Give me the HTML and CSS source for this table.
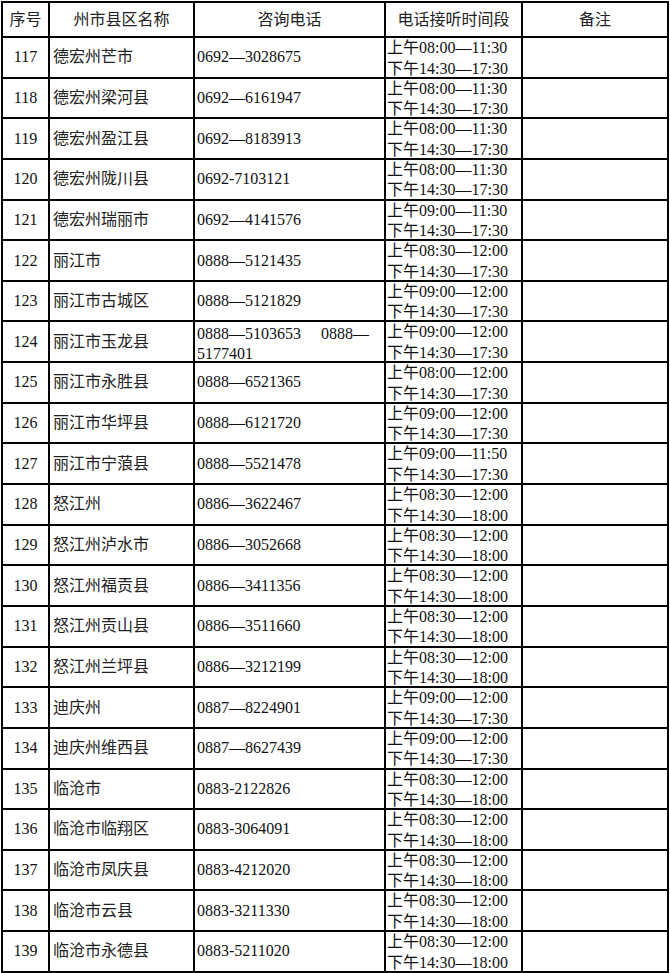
FILE: index.html
```html
<!DOCTYPE html>
<html lang="zh-CN">
<head>
<meta charset="utf-8">
<title>咨询电话表</title>
<link rel="stylesheet" href="styles.css">
</head>
<body>
<table class="tbl">
<colgroup>
<col class="c-no"><col class="c-name"><col class="c-tel"><col class="c-time"><col class="c-note">
</colgroup>
<thead>
<tr class="head"><th>序号</th><th>州市县区名称</th><th>咨询电话</th><th>电话接听时间段</th><th>备注</th></tr>
</thead>
<tbody>
<tr><td class="no">117</td><td class="name">德宏州芒市</td><td class="tel">0692—3028675</td><td class="time"><div class="lines">上午08:00—11:30<br>下午14:30—17:30</div></td><td></td></tr>
<tr><td class="no">118</td><td class="name">德宏州梁河县</td><td class="tel">0692—6161947</td><td class="time"><div class="lines">上午08:00—11:30<br>下午14:30—17:30</div></td><td></td></tr>
<tr><td class="no">119</td><td class="name">德宏州盈江县</td><td class="tel">0692—8183913</td><td class="time"><div class="lines">上午08:00—11:30<br>下午14:30—17:30</div></td><td></td></tr>
<tr><td class="no">120</td><td class="name">德宏州陇川县</td><td class="tel">0692-7103121</td><td class="time"><div class="lines">上午08:00—11:30<br>下午14:30—17:30</div></td><td></td></tr>
<tr><td class="no">121</td><td class="name">德宏州瑞丽市</td><td class="tel">0692—4141576</td><td class="time"><div class="lines">上午09:00—11:30<br>下午14:30—17:30</div></td><td></td></tr>
<tr><td class="no">122</td><td class="name">丽江市</td><td class="tel">0888—5121435</td><td class="time"><div class="lines">上午08:30—12:00<br>下午14:30—17:30</div></td><td></td></tr>
<tr><td class="no">123</td><td class="name">丽江市古城区</td><td class="tel">0888—5121829</td><td class="time"><div class="lines">上午09:00—12:00<br>下午14:30—17:30</div></td><td></td></tr>
<tr><td class="no">124</td><td class="name">丽江市玉龙县</td><td class="tel"><div class="lines two">0888—5103653<span class="gap"></span>0888—<br>5177401</div></td><td class="time"><div class="lines">上午09:00—12:00<br>下午14:30—17:30</div></td><td></td></tr>
<tr><td class="no">125</td><td class="name">丽江市永胜县</td><td class="tel">0888—6521365</td><td class="time"><div class="lines">上午08:00—12:00<br>下午14:30—17:30</div></td><td></td></tr>
<tr><td class="no">126</td><td class="name">丽江市华坪县</td><td class="tel">0888—6121720</td><td class="time"><div class="lines">上午09:00—12:00<br>下午14:30—17:30</div></td><td></td></tr>
<tr><td class="no">127</td><td class="name">丽江市宁蒗县</td><td class="tel">0888—5521478</td><td class="time"><div class="lines">上午09:00—11:50<br>下午14:30—17:30</div></td><td></td></tr>
<tr><td class="no">128</td><td class="name">怒江州</td><td class="tel">0886—3622467</td><td class="time"><div class="lines">上午08:30—12:00<br>下午14:30—18:00</div></td><td></td></tr>
<tr><td class="no">129</td><td class="name">怒江州泸水市</td><td class="tel">0886—3052668</td><td class="time"><div class="lines">上午08:30—12:00<br>下午14:30—18:00</div></td><td></td></tr>
<tr><td class="no">130</td><td class="name">怒江州福贡县</td><td class="tel">0886—3411356</td><td class="time"><div class="lines">上午08:30—12:00<br>下午14:30—18:00</div></td><td></td></tr>
<tr><td class="no">131</td><td class="name">怒江州贡山县</td><td class="tel">0886—3511660</td><td class="time"><div class="lines">上午08:30—12:00<br>下午14:30—18:00</div></td><td></td></tr>
<tr><td class="no">132</td><td class="name">怒江州兰坪县</td><td class="tel">0886—3212199</td><td class="time"><div class="lines">上午08:30—12:00<br>下午14:30—18:00</div></td><td></td></tr>
<tr><td class="no">133</td><td class="name">迪庆州</td><td class="tel">0887—8224901</td><td class="time"><div class="lines">上午09:00—12:00<br>下午14:30—17:30</div></td><td></td></tr>
<tr><td class="no">134</td><td class="name">迪庆州维西县</td><td class="tel">0887—8627439</td><td class="time"><div class="lines">上午09:00—12:00<br>下午14:30—17:30</div></td><td></td></tr>
<tr><td class="no">135</td><td class="name">临沧市</td><td class="tel">0883-2122826</td><td class="time"><div class="lines">上午08:30—12:00<br>下午14:30—18:00</div></td><td></td></tr>
<tr><td class="no">136</td><td class="name">临沧市临翔区</td><td class="tel">0883-3064091</td><td class="time"><div class="lines">上午08:30—12:00<br>下午14:30—18:00</div></td><td></td></tr>
<tr><td class="no">137</td><td class="name">临沧市凤庆县</td><td class="tel">0883-4212020</td><td class="time"><div class="lines">上午08:30—12:00<br>下午14:30—18:00</div></td><td></td></tr>
<tr><td class="no">138</td><td class="name">临沧市云县</td><td class="tel">0883-3211330</td><td class="time"><div class="lines">上午08:30—12:00<br>下午14:30—18:00</div></td><td></td></tr>
<tr><td class="no">139</td><td class="name">临沧市永德县</td><td class="tel">0883-5211020</td><td class="time"><div class="lines">上午08:30—12:00<br>下午14:30—18:00</div></td><td></td></tr>
</tbody>
</table>
</body>
</html>
```
FILE: styles.css
```css
html, body {
  margin: 0;
  padding: 0;
  background: #fff;
}
body {
  padding: 1px 0 0 1px;
  font-family: "Liberation Serif", "Noto Sans CJK SC", serif;
  font-size: 16px;
  color: #111;
}
.tbl {
  border-collapse: collapse;
  table-layout: fixed;
  width: 668px;
}
.c-no { width: 47px; }
.c-name { width: 145px; }
.c-tel { width: 191px; }
.c-time { width: 137px; }
.c-note { width: 146px; }
.tbl th, .tbl td {
  border: 2px solid #000;
  padding: 0;
  font-weight: normal;
  vertical-align: middle;
  white-space: nowrap;
  line-height: 20px;
}
.head { height: 35px; }
.head th {
  text-align: center;
  color: #222;
}
tbody tr { height: 40.65px; }
.no { text-align: center; }
.name { padding-left: 3px !important; color: #222; }
.tel { padding-left: 2px !important; }
.lines {
  height: 36px;
  line-height: 20.5px;
  overflow: visible;
}
.lines.two { line-height: 20px; }
.gap { display: inline-block; width: 20px; }
.time {
  padding-left: 1px !important;
  vertical-align: top !important;
}
```
